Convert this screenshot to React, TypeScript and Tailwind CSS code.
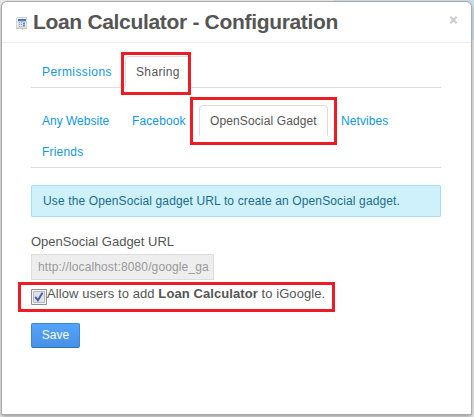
import type { ReactNode } from "react";

function Highlight({ className }: { className: string }) {
  return <span className={`pointer-events-none absolute z-10 border-3 border-[#ed1c24] ${className}`} />;
}

function Tab({ children, className = "" }: { children: ReactNode; className?: string }) {
  return (
    <a className={`block h-[31px] whitespace-nowrap border border-transparent px-[10px] pt-[5px] leading-[20px] text-[#1098e0] ${className}`}>
      {children}
    </a>
  );
}

function CalculatorIcon() {
  return (
    <svg width="12" height="14" viewBox="0 0 12 14" shapeRendering="crispEdges">
      <path d="M1 1h9l1 1v10H0V2z" fill="#cfd2d8" />
      <path d="M1 2h9v9H1z" fill="#eceef2" />
      <path d="M2 3h8v2H2z" fill="#4779bd" />
      <path d="M2 5h8v1H2z" fill="#b9cbe4" />
      <path d="M2 6h5v5H2z" fill="#d9dce2" />
      <path d="M3 6h1v1H3zM3 8h1v1H3zM3 10h1v1H3zM5 6h1v1H5zM5 8h1v1H5zM5 10h1v1H5z" fill="#a5abb6" />
      <path d="M7 6h2v5H7z" fill="#9db8de" />
      <path d="M7 7h2v1H7zM7 9h2v1H7z" fill="#5f8bc5" />
      <path d="M0 11h11v1H0z" fill="#dadada" />
      <path d="M0 12h11v1H0z" fill="#c9c9c9" />
      <path d="M5 13h3v1H5z" fill="#f8e3bd" />
    </svg>
  );
}

export default function App() {
  return (
    <div className="relative h-[417px] w-[474px] overflow-hidden bg-[#e6e6e6] pl-[2px] pt-[2px] font-['Liberation_Sans',Arial,sans-serif] text-[12px] text-[#555]">
      <div className="absolute right-0 top-0 h-10 w-[140px] bg-[#c5deed]" />
      <div className="relative h-[412px] w-[469px] rounded-t-[5px] bg-white shadow-[0_0_0_1px_#aaa,0_2px_4px_0_#888]">
        <header className="flex h-[41px] items-start border-b border-[#eee] pl-[14px] pr-[13px]">
          <div className="mt-[14px] w-[17px]"><CalculatorIcon /></div>
          <h1 className="mt-[5px] flex-1 whitespace-nowrap text-[21px] font-bold leading-[30px] tracking-[-0.32px]">Loan Calculator - Configuration</h1>
          <svg className="mt-[14px]" width="9" height="8" viewBox="0 0 9 8">
            <path d="M1.3.8 7.7 7.2M7.7.8 1.3 7.2" stroke="#ccc" strokeWidth="2.2" />
          </svg>
        </header>

        <main className="pl-[29px] pr-[30px] pt-[13px]">
          <nav className="flex border-b border-[#ddd]">
            <Tab className="w-[94px] tracking-[0.42px]">Permissions</Tab>
            <div className="relative -mb-px h-8">
              <Tab className="h-8! w-[66px] rounded-t-[4px] border-[#ddd]! border-b-white! bg-white text-[#555]! tracking-[0.35px]">Sharing</Tab>
              <Highlight className="-left-[4px] -top-[4px] h-[43px] w-[70px]" />
            </div>
          </nav>

          <nav className="mt-[17px] flex flex-wrap border-b border-[#ddd]">
            <Tab className="w-[90px]">Any Website</Tab>
            <Tab className="w-[78px] tracking-[0.12px]">Facebook</Tab>
            <div className="relative">
              <Tab className="w-[129px] rounded-t-[4px] border-[#ddd]! border-b-white! bg-white text-[#555]! tracking-[0.12px]">OpenSocial Gadget</Tab>
              <Highlight className="-left-[9px] -top-[8px] h-[48px] w-[147px]" />
            </div>
            <Tab className="ml-[2px] tracking-[0.08px]">Netvibes</Tab>
            <Tab className="tracking-[0.2px]">Friends</Tab>
          </nav>

          <div className="mt-[17px] h-8 whitespace-nowrap rounded-[1px] border border-[#a0e3f4] bg-[#cff1fc] pl-[11px] leading-[31px] tracking-[0.13px] text-[#1b6e8a]">
            Use the OpenSocial gadget URL to create an OpenSocial gadget.
          </div>

          <label className="mt-[15px] block text-[13px] leading-[20px]">OpenSocial Gadget URL</label>
          <div className="mt-[2px] h-[26px] w-[183px] whitespace-nowrap border border-[#ddd] bg-[#eee] pl-[6px] leading-[24px] tracking-[0.13px] text-[#999]">
            http://localhost:8080/google_ga
          </div>

          <div className="relative mt-[2px] flex h-[30px]">
            <Highlight className="-left-[13px] top-0 h-[30px] w-[317px]" />
            <svg className="mt-[7px] shrink-0" width="16" height="16" viewBox="0 0 16 16">
              <path d="M.5.5h15v15H.5z" fill="#f4f4f4" stroke="#8e8f8f" />
              <path d="M2.5 2.5h11v11h-11z" fill="#dfe3e9" stroke="#b4b9c1" />
              <path d="m4.2 7.8 2.7 3.4 4.6-7.4" fill="none" stroke="#4b5f9e" strokeWidth="2" />
            </svg>
            <span className="mt-[2px] whitespace-nowrap text-[13px] leading-[20px] tracking-[0.08px]">
              Allow users to add <b>Loan Calculator</b> to iGoogle.
            </span>
          </div>

          <button className="mt-[11px] block h-[25px] w-[49px] rounded-[2px] border border-[#3e86cf] border-b-[#2f70b3] bg-linear-to-b from-[#54a4fb] to-[#4691e6] leading-[23px] text-white">
            Save
          </button>
        </main>
      </div>
    </div>
  );
}
